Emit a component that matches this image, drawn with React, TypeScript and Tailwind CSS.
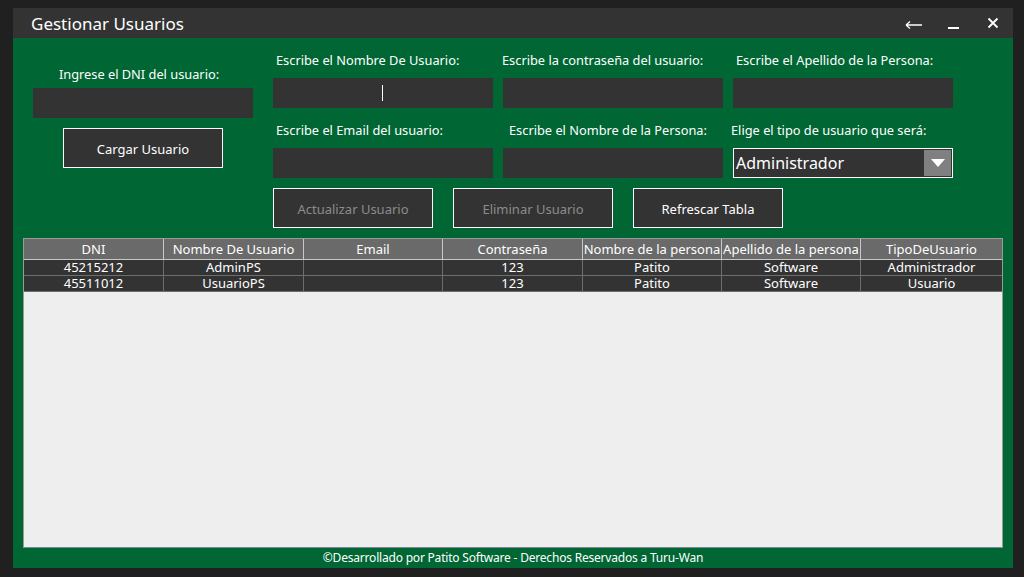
import React from 'react';

const rows = [
  ['45215212', 'AdminPS', '', '123', 'Patito', 'Software', 'Administrador'],
  ['45511012', 'UsuarioPS', '', '123', 'Patito', 'Software', 'Usuario'],
];

const headers = [
  'DNI',
  'Nombre De Usuario',
  'Email',
  'Contraseña',
  'Nombre de la persona',
  'Apellido de la persona',
  'TipoDeUsuario',
];

const Field: React.FC<{ label: string; shift: string; caret?: boolean }> = ({ label, shift, caret }) => (
  <div className="w-[220px]">
    <div className={`h-[20px] leading-[20px] text-[12.8px] text-white whitespace-nowrap ${shift}`}>{label}</div>
    <div className="mt-[8px] h-[30px] bg-[#333333] flex items-center justify-center">
      {caret && <div className="w-px h-[16px] bg-white ml-[-2px]" />}
    </div>
  </div>
);

const App: React.FC = () => {
  return (
    <div
      className="w-[1024px] h-[577px] bg-[#202020] pt-[8px] pl-[13px]"
      style={{ fontFamily: '"Noto Sans", "DejaVu Sans", sans-serif' }}
    >
      <div className="w-[1000px] h-[560px] flex flex-col">
        {/* barra de titulo */}
        <div className="h-[30px] bg-[#333333] flex items-center text-white">
          <div className="pl-[18px] text-[17px] leading-none">Gestionar Usuarios</div>
          <div className="ml-auto flex items-center">
            <svg width="18" height="10" viewBox="0 0 18 10" className="mr-[25px] mt-[3px]">
              <path d="M1 5 H17 M1 5 L5 1.5 M1 5 L5 8.5" stroke="white" strokeWidth="1.3" fill="none" />
            </svg>
            <div className="w-[11px] h-[2px] bg-white mt-[10px] mr-[28px]" />
            <svg width="12" height="12" viewBox="0 0 12 12" className="mr-[14px]">
              <path d="M1.5 1.5 L10.5 10.5 M10.5 1.5 L1.5 10.5" stroke="white" strokeWidth="1.8" />
            </svg>
          </div>
        </div>

        {/* cuerpo */}
        <div className="flex-1 bg-[#006633] flex flex-col">
          <div className="flex">
            <div className="w-[220px] ml-[20px] pt-[26px] flex flex-col items-center">
              <div className="h-[20px] leading-[20px] text-[12.8px] text-white mr-[8px]">Ingrese el DNI del usuario:</div>
              <div className="mt-[4px] w-[220px] h-[30px] bg-[#333333]" />
              <button className="mt-[10px] w-[160px] h-[40px] pt-[3px] bg-[#333333] border border-white text-white text-[13px]">
                Cargar Usuario
              </button>
            </div>

            <div className="ml-[20px] pt-[12px]">
              <div className="flex gap-[10px]">
                <Field label="Escribe el Nombre De Usuario:" shift="ml-[3px]" caret />
                <Field label="Escribe la contraseña del usuario:" shift="ml-[-1px]" />
                <Field label="Escribe el Apellido de la Persona:" shift="ml-[3px]" />
              </div>
              <div className="flex gap-[10px] mt-[12px]">
                <Field label="Escribe el Email del usuario:" shift="ml-[3px]" />
                <Field label="Escribe el Nombre de la Persona:" shift="ml-[6px]" />
                <div className="w-[220px]">
                  <div className="h-[20px] leading-[20px] text-[12.8px] text-white whitespace-nowrap ml-[-2px]">
                    Elige el tipo de usuario que será:
                  </div>
                  <div className="mt-[8px] h-[30px] bg-[#333333] border border-white flex items-stretch">
                    <div className="flex-1 text-white text-[16px] leading-[28px] pl-[2px]">Administrador</div>
                    <div className="w-[27px] bg-[#808080] flex items-center justify-center mr-[1px] my-[1px]">
                      <svg width="14" height="9" viewBox="0 0 14 9">
                        <path d="M0 0 H14 L7 8 Z" fill="white" />
                      </svg>
                    </div>
                  </div>
                </div>
              </div>
              <div className="flex gap-[20px] mt-[10px]">
                <button className="w-[160px] h-[40px] pt-[3px] bg-[#333333] border border-white text-[#8c8c8c] text-[13px]">
                  Actualizar Usuario
                </button>
                <button className="w-[160px] h-[40px] pt-[3px] bg-[#333333] border border-white text-[#8c8c8c] text-[13px]">
                  Eliminar Usuario
                </button>
                <button className="w-[150px] h-[40px] pt-[3px] bg-[#333333] border border-white text-white text-[13px]">
                  Refrescar Tabla
                </button>
              </div>
            </div>
          </div>

          {/* tabla */}
          <div className="mt-[10px] ml-[10px] w-[980px] h-[310px] bg-[#eeeeee] border border-[#9a9a9a] border-b-[#7b8898] text-[13px]">
            <div className="grid grid-cols-[140px_140px_139px_140px_139px_139px_141px] h-[21px] bg-[#6a6a6a] text-white">
              {headers.map((h) => (
                <div
                  key={h}
                  className="border-r border-b border-[#c8c8c8] last:border-r-0 flex items-center justify-center leading-none whitespace-nowrap overflow-hidden"
                >
                  {h}
                </div>
              ))}
            </div>
            {rows.map((r, i) => (
              <div
                key={i}
                className="grid grid-cols-[140px_140px_139px_140px_139px_139px_141px] h-[16px] bg-[#333333] text-white"
              >
                {r.map((c, j) => (
                  <div
                    key={j}
                    className="border-r border-b border-[#6e6e6e] last:border-r-0 flex items-center justify-center leading-none"
                  >
                    {c}
                  </div>
                ))}
              </div>
            ))}
          </div>

          <div className="h-[20px] flex items-center justify-center text-white text-[12px] tracking-[-0.2px]">
            ©Desarrollado por Patito Software - Derechos Reservados a Turu-Wan
          </div>
        </div>
      </div>
    </div>
  );
};

export default App;
